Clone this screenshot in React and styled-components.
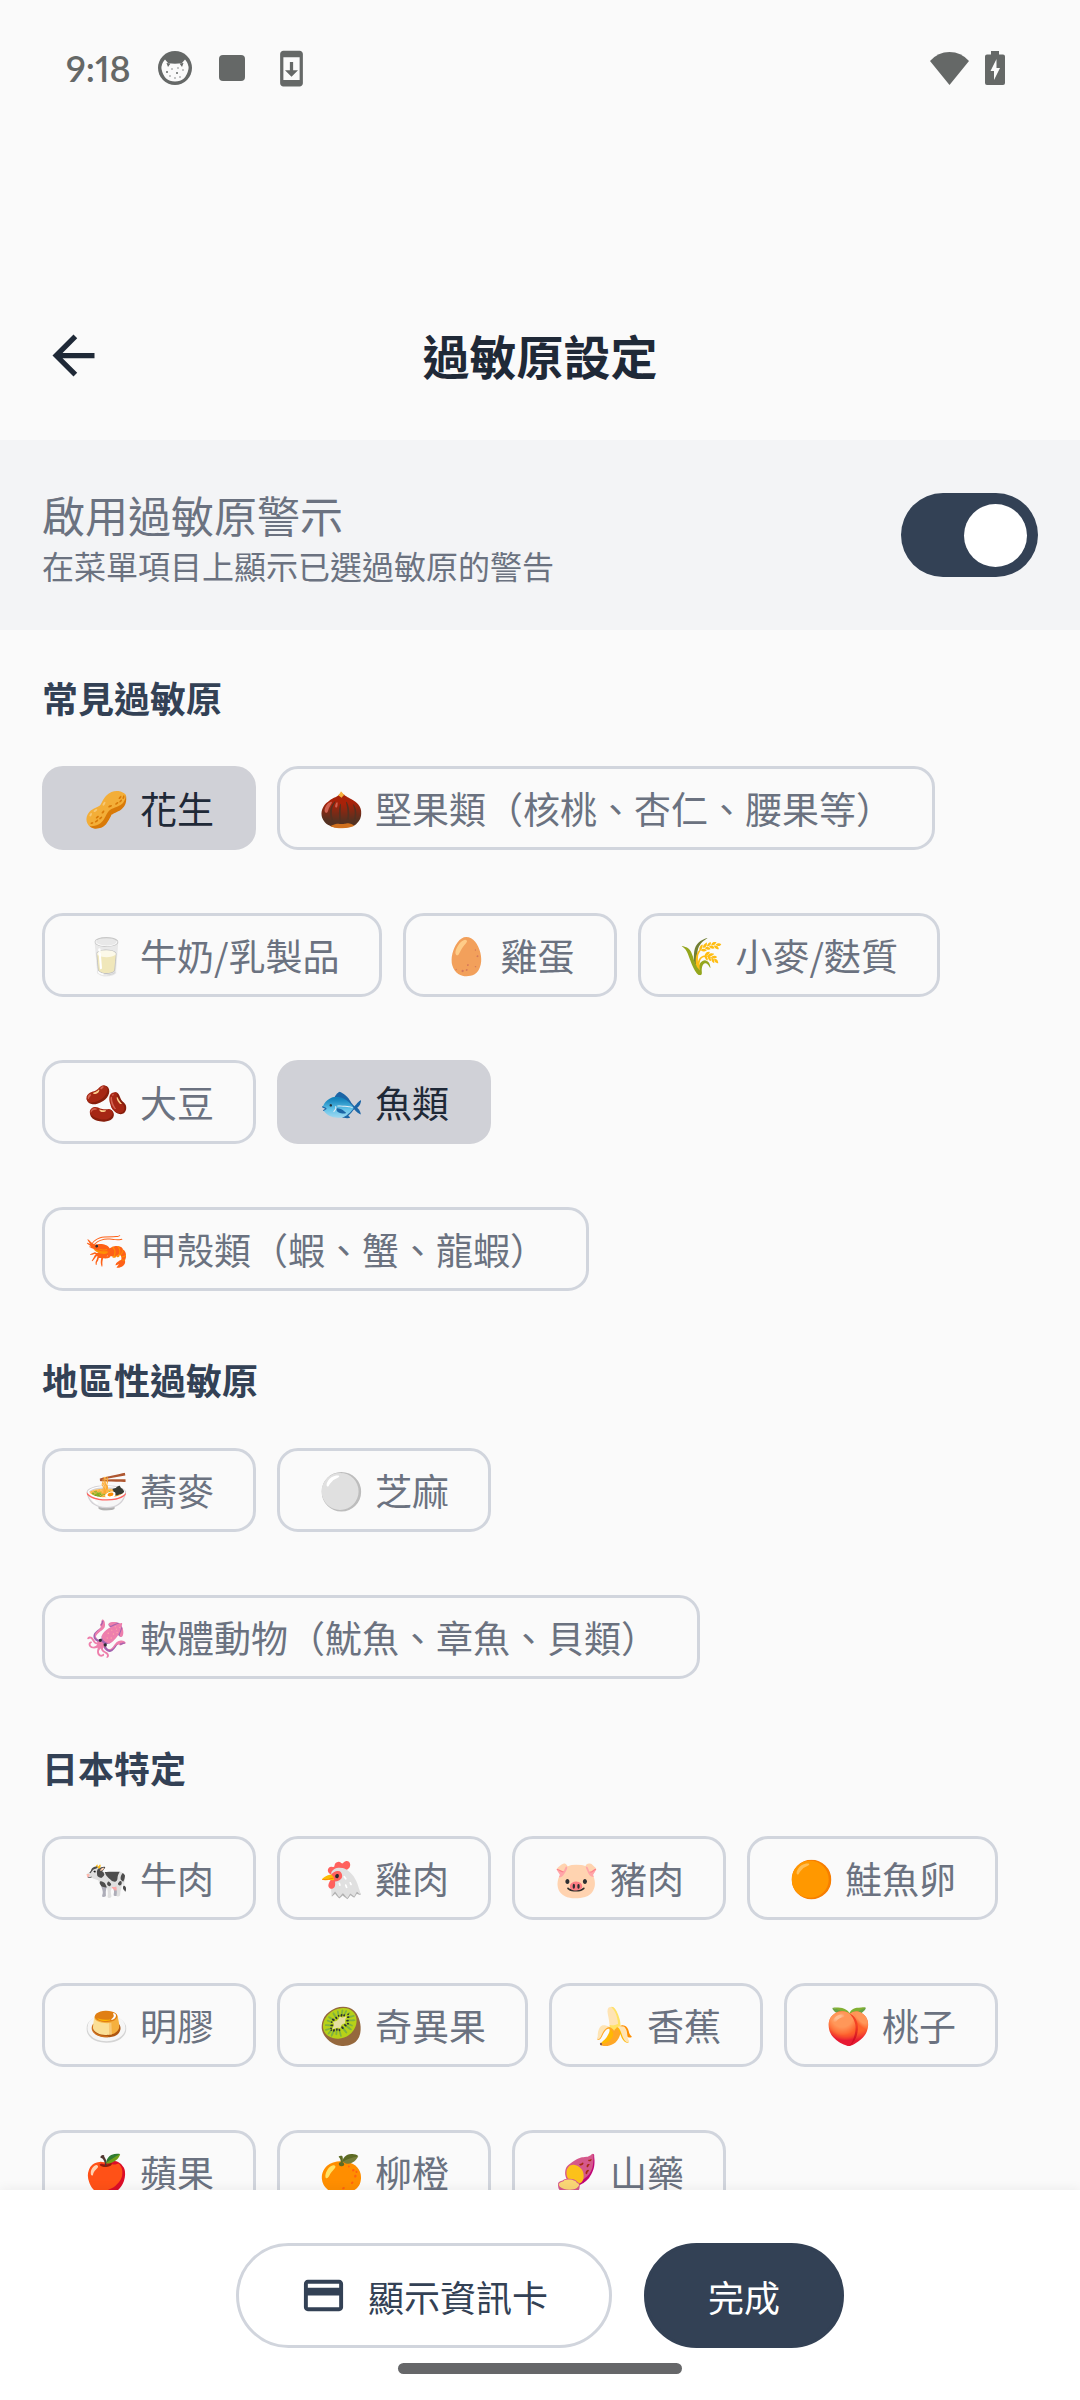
import { useState } from "react";
import styled, { createGlobalStyle } from "styled-components";
import { MdArrowBack, MdCreditCard, MdSystemUpdate } from "react-icons/md";

const sections = [
  {
    title: "常見過敏原",
    items: [
      ["🥜", "花生"],
      ["🌰", "堅果類（核桃、杏仁、腰果等）"],
      ["🥛", "牛奶/乳製品"],
      ["🥚", "雞蛋"],
      ["🌾", "小麥/麩質"],
      ["🫘", "大豆"],
      ["🐟", "魚類"],
      ["🦐", "甲殼類（蝦、蟹、龍蝦）"],
    ],
  },
  {
    title: "地區性過敏原",
    items: [
      ["🍜", "蕎麥"],
      ["⚪", "芝麻"],
      ["🦑", "軟體動物（魷魚、章魚、貝類）"],
    ],
  },
  {
    title: "日本特定",
    items: [
      ["🐄", "牛肉"],
      ["🐔", "雞肉"],
      ["🐷", "豬肉"],
      ["🟠", "鮭魚卵"],
      ["🍮", "明膠"],
      ["🥝", "奇異果"],
      ["🍌", "香蕉"],
      ["🍑", "桃子"],
      ["🍎", "蘋果"],
      ["🍊", "柳橙"],
      ["🍠", "山藥"],
    ],
  },
];

export default function App() {
  const [enabled, setEnabled] = useState(true);
  const [selected, setSelected] = useState(["花生", "魚類"]);

  const toggleItem = (name) => {
    setSelected((list) =>
      list.includes(name) ? list.filter((n) => n !== name) : [...list, name]
    );
  };

  return (
    <Page>
      <GlobalStyle />
      <StatusBar>
        <StatusGroup>
          <Clock>9:18</Clock>
          <CatIcon />
          <SquareIcon />
          <MdSystemUpdate size={39} />
        </StatusGroup>
        <SignalGroup>
          <WifiIcon />
          <BatteryIcon />
        </SignalGroup>
      </StatusBar>

      <Header>
        <BackButton aria-label="返回">
          <MdArrowBack size={63} />
        </BackButton>
        <h1>過敏原設定</h1>
      </Header>

      <Banner>
        <BannerText>
          <strong>啟用過敏原警示</strong>
          <span>在菜單項目上顯示已選過敏原的警告</span>
        </BannerText>
        <Switch
          type="checkbox"
          role="switch"
          aria-label="啟用過敏原警示"
          checked={enabled}
          onChange={() => setEnabled(!enabled)}
        />
      </Banner>

      <List>
        {sections.map((section) => (
          <Section key={section.title}>
            <h2>{section.title}</h2>
            <Chips>
              {section.items.map(([emoji, name]) => (
                <Chip
                  key={name}
                  $selected={selected.includes(name)}
                  aria-pressed={selected.includes(name)}
                  onClick={() => toggleItem(name)}
                >
                  <Emoji aria-hidden="true">{emoji}</Emoji>
                  {name}
                </Chip>
              ))}
            </Chips>
          </Section>
        ))}
      </List>

      <Footer>
        <Actions>
          <ActionButton>
            <MdCreditCard size={47} />
            顯示資訊卡
          </ActionButton>
          <ActionButton $primary>完成</ActionButton>
        </Actions>
        <HomeBar />
      </Footer>
    </Page>
  );
}

function CatIcon() {
  return (
    <svg width="34" height="34" viewBox="0 0 34 34">
      <circle cx="17" cy="17" r="17" fill="#656867" />
      <path
        d="M7 8.500 L10 12 Q17 13.500 24 12 L27 8.500 Q31 13 30.500 18 Q28 30.500 17 30.500 Q6 30.500 3.500 18 Q3 13 7 8.500Z"
        fill="#fafafa"
      />
      <g fill="#656867">
        <path d="M8.500 12 l4 .500 -2.500 3.500z M25.500 12 l-4 .500 2.500 3.500z" />
        <circle cx="9" cy="21" r="1" />
        <circle cx="14" cy="18" r=".7" />
        <circle cx="19" cy="22" r="1" />
        <circle cx="20" cy="17" r=".7" />
        <circle cx="25" cy="19" r=".7" />
        <circle cx="12" cy="25" r=".7" />
        <circle cx="17" cy="27" r=".7" />
        <circle cx="22" cy="26" r=".7" />
      </g>
    </svg>
  );
}

function SquareIcon() {
  return (
    <svg width="26" height="26" viewBox="0 0 26 26">
      <rect width="26" height="26" rx="4" fill="#656867" />
    </svg>
  );
}

function WifiIcon() {
  return (
    <svg width="39" height="33" viewBox="0 0 39 33">
      <path d="M0 9 Q8 0 19.500 0 Q31 0 39 9 L19.500 33Z" fill="#656867" />
    </svg>
  );
}

function BatteryIcon() {
  return (
    <svg width="20" height="34" viewBox="0 0 20 34">
      <path
        d="M6 0 H14 V3.500 H18 Q20 3.500 20 5.500 V32 Q20 34 18 34 H2 Q0 34 0 32 V5.500 Q0 3.500 2 3.500 H6Z"
        fill="#656867"
      />
      <path d="M11.500 8 L5.500 20 H9 V29 L15 17 H11.500Z" fill="#fafafa" />
    </svg>
  );
}

const GlobalStyle = createGlobalStyle`
  * {
    box-sizing: border-box;
  }

  body {
    margin: 0;
    background: #fafafa;
  }

  body, button {
    font-family: "Noto Sans CJK TC", "Noto Sans", "Noto Color Emoji", sans-serif;
  }

  h1, h2 {
    margin: 0;
    font-weight: 700;
  }
`;

const Page = styled.div`
  height: 100vh;
  display: flex;
  flex-direction: column;
  background: #fafafa;
`;

const StatusBar = styled.div`
  height: 136px;
  display: flex;
  align-items: center;
  justify-content: space-between;
  padding: 0 75px 0 66px;
  color: #656867;
`;

const StatusGroup = styled.div`
  display: flex;
  align-items: center;
  gap: 27px;
`;

const SignalGroup = styled.div`
  display: flex;
  align-items: center;
  gap: 16px;
`;

const Clock = styled.span`
  width: 65px;
  font-family: "Lato", sans-serif;
  font-size: 36px;
  font-weight: 600;
  font-variant-numeric: proportional-nums;
  line-height: 36px;
`;

const Header = styled.header`
  display: grid;
  grid-template-columns: 63px 1fr 63px;
  align-items: center;
  padding: 186px 42px 52px;
  color: #1f2937;

  h1 {
    font-size: 47px;
    line-height: 66px;
    text-align: center;
  }
`;

const BackButton = styled.button`
  display: flex;
  padding: 0;
  border: 0;
  background: none;
  color: inherit;
  cursor: pointer;
`;

const Banner = styled.div`
  display: flex;
  align-items: center;
  justify-content: space-between;
  height: 190px;
  padding: 0 42px;
  background: #f3f4f6;
`;

const BannerText = styled.div`
  display: flex;
  flex-direction: column;
  color: #6b7280;

  strong {
    font-size: 43px;
    font-weight: 400;
    line-height: 60px;
  }

  span {
    font-size: 32px;
    line-height: 42px;
  }
`;

const Switch = styled.input`
  appearance: none;
  display: flex;
  align-items: center;
  width: 137px;
  height: 84px;
  margin: 0;
  padding: 0 11px;
  border-radius: 42px;
  background: #334155;
  cursor: pointer;

  &::before {
    content: "";
    width: 63px;
    height: 63px;
    border-radius: 50%;
    background: #ffffff;
  }

  &:checked::before {
    margin-left: auto;
  }

  &:not(:checked) {
    background: #d1d5db;
  }
`;

const List = styled.main`
  flex: 1;
  min-height: 0;
  overflow-y: auto;
  scrollbar-width: none;
  padding: 42px 42px 0;
`;

const Section = styled.section`
  padding-bottom: 63px;

  h2 {
    margin-bottom: 44px;
    font-size: 36px;
    line-height: 50px;
    color: #334155;
  }
`;

const Chips = styled.div`
  display: flex;
  flex-wrap: wrap;
  gap: 63px 21px;
`;

const Chip = styled.button`
  display: flex;
  align-items: center;
  height: 84px;
  padding: 0 39px;
  border: 3px solid ${({ $selected }) => ($selected ? "#d0d1d7" : "#d1d5dd")};
  border-radius: 21px;
  background: ${({ $selected }) => ($selected ? "#d0d1d7" : "transparent")};
  color: ${({ $selected }) => ($selected ? "#1f2937" : "#6b7280")};
  font-size: 37px;
  white-space: nowrap;
  cursor: pointer;
`;

const Emoji = styled.span`
  width: 56px;
  padding-top: 4px;
  text-align: left;
  font-family: "Noto Color Emoji", sans-serif;
  font-size: 36px;
`;

const Footer = styled.footer`
  display: flex;
  flex-direction: column;
  align-items: center;
  gap: 15px;
  padding: 53px 42px 26px;
  background: #ffffff;
  box-shadow: 0 -2px 10px rgba(0, 0, 0, 0.05);
`;

const Actions = styled.div`
  display: flex;
  gap: 32px;
`;

const ActionButton = styled.button`
  display: flex;
  align-items: center;
  gap: 21px;
  height: 105px;
  padding: 0 61px;
  border: 3px solid ${({ $primary }) => ($primary ? "#334155" : "#d1d5dd")};
  border-radius: 53px;
  background: ${({ $primary }) => ($primary ? "#334155" : "#ffffff")};
  color: ${({ $primary }) => ($primary ? "#ffffff" : "#334155")};
  font-size: 36px;
  cursor: pointer;
`;

const HomeBar = styled.div`
  width: 284px;
  height: 11px;
  border-radius: 6px;
  background: #666769;
`;
